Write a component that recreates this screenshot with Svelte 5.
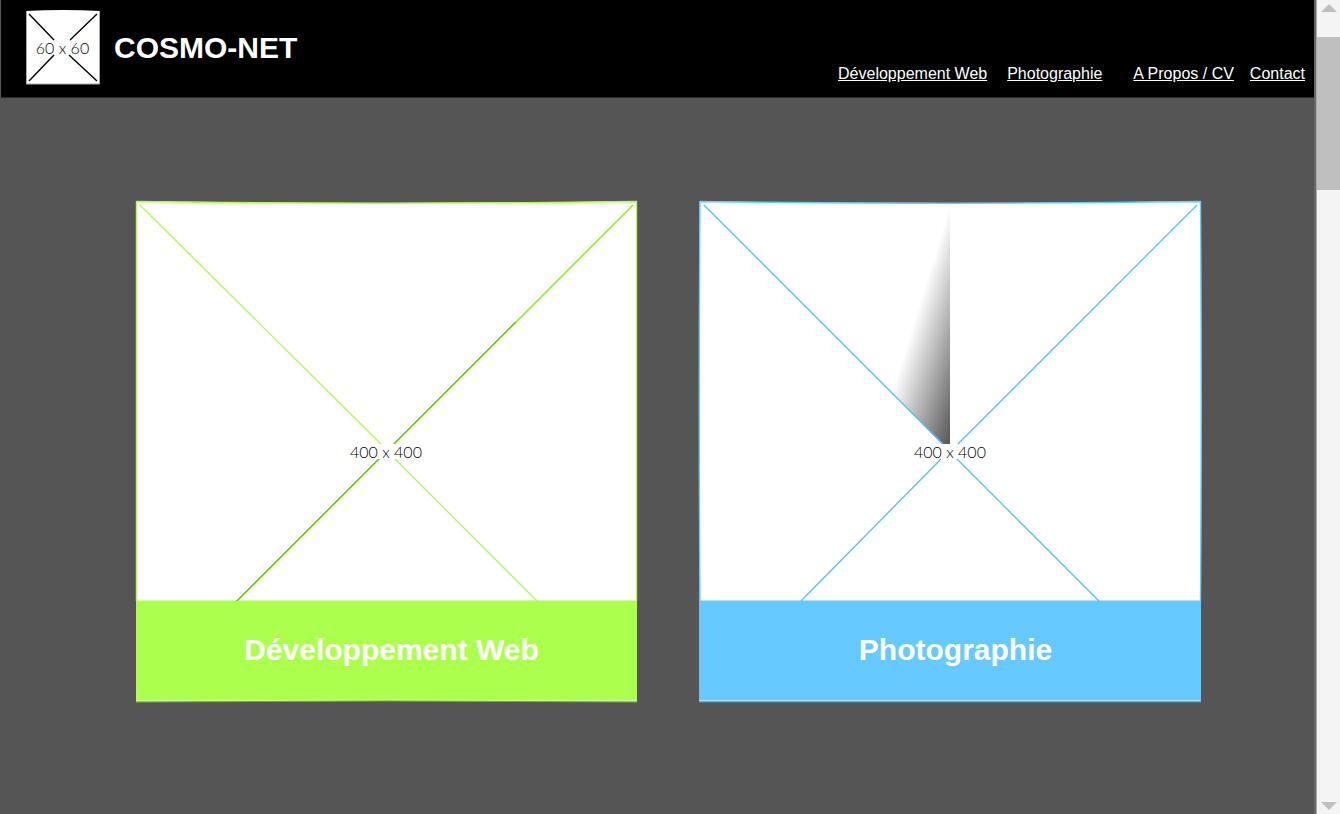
<script>
  const links = [
    { label: 'Développement Web', href: '#web', cls: 'web' },
    { label: 'Photographie', href: '#photo', cls: 'photo' },
    { label: 'A Propos / CV', href: '#cv', cls: 'cv' },
    { label: 'Contact', href: '#contact', cls: 'contact' }
  ];
</script>

<div class="window">
  <div class="page">
    <header>
      <a class="brand" href="#home">
        <svg class="logo" viewBox="0 0 74 76" aria-hidden="true">
          <path d="M0 2Q37 0 74 2V75H0Z" fill="#fff" />
          <path d="M0.5 75V2M73.5 2V75H0" fill="none" stroke="#aaa" stroke-width="1" />
          <path d="M3 5L28 31M71 5L44 31M28 46L3 72M43 46L71 72" fill="none" stroke="#000" stroke-width="1.4" />
          <text x="36.5" y="45" text-anchor="middle">60 x 60</text>
        </svg>
        <h1>COSMO-NET</h1>
      </a>
      <nav>
        {#each links as link}
          <a class={link.cls} href={link.href}>{link.label}</a>
        {/each}
      </nav>
    </header>

    <main>
      <a class="card green" href="#web">
        <svg viewBox="0 0 501 501" aria-hidden="true">
          <path d="M0 0Q250 4 501 0V501Q250 499 0 501Z" fill="#fff" />
          <path d="M0.5 0.5Q250 4 500.5 0.5V400M0.5 0.5V400" fill="none" stroke="#adff4d" stroke-width="1.4" />
          <path d="M0 399.5H501V501Q250 499 0 501Z" fill="#adff4d" />
          <path d="M1 499.5Q250 498.5 500 499.5" fill="none" stroke="#d0ff98" stroke-width="1" />
          <path d="M0 501Q250 499 501 501" fill="none" stroke="#78a845" stroke-width="1" />
          <path d="M4 4L245 243M259 258L401 400" stroke="#adff4d" stroke-width="1.3" />
          <path d="M497 4L258.5 243M243.5 258L101.5 400" stroke="#a4f842" stroke-width="1.6" />
          <path d="M380 120.5L257.5 243M242.5 258L100.5 400" stroke="#2c5410" stroke-width="0.8" />
          <path d="M497 4L380 120.5" stroke="#88d234" stroke-width="0.8" />
          <text x="250" y="257" text-anchor="middle">400 x 400</text>
        </svg>
        <h2>Développement Web</h2>
      </a>
      <a class="card blue" href="#photo">
        <svg viewBox="0 0 501 501" aria-hidden="true">
          <defs>
            <linearGradient id="shade" gradientUnits="userSpaceOnUse" x1="193" y1="191" x2="261" y2="212">
              <stop offset="0" stop-color="#fff" />
              <stop offset="1" stop-color="#555" />
            </linearGradient>
          </defs>
          <path d="M0.5 0Q250 4 502 0V501H0.5Z" fill="#fff" />
          <path d="M251 5V243H243L193 193Z" fill="url(#shade)" />
          <path d="M1 0.5Q250 4 501.5 0.5Q503 200 501.5 400M1 0.5Q-0.5 200 1 400" fill="none" stroke="#66c9ff" stroke-width="1.4" />
          <path d="M0.5 399.5H502V501H0.5Z" fill="#66c9ff" />
          <path d="M1 499.5H501" stroke="#b2e4ff" stroke-width="1" />
          <path d="M0.5 501H502" stroke="#519bc4" stroke-width="1" />
          <path d="M5 4L244 243M258 258L400 400M498 4L259 243M242 258L102 400" stroke="#58bdf3" stroke-width="1.3" />
          <text x="251" y="257" text-anchor="middle">400 x 400</text>
        </svg>
        <h2>Photographie</h2>
      </a>
    </main>
  </div>

  <div class="scroll" aria-hidden="true">
    <svg viewBox="0 0 16 8"><path d="M0 8L8 0L16 8Z" /></svg>
    <div class="track"><div class="thumb"></div></div>
    <svg viewBox="0 0 16 8"><path d="M0 0L8 8L16 0Z" /></svg>
  </div>
</div>

<style>
  :global(body) {
    margin: 0;
    background: #555;
    font-family: "Liberation Sans", Arial, sans-serif;
  }
  .window {
    display: flex;
    min-height: 100vh;
    background: #555;
  }
  .page {
    flex: 1;
    min-width: 0;
    padding-left: 1px;
    border-right: 2px solid #686868;
  }
  header {
    display: flex;
    justify-content: space-between;
    box-sizing: border-box;
    min-height: 98px;
    padding: 9px 9px 12px 25px;
    background: #000;
    border-bottom: 1px solid #292929;
  }
  a {
    color: #fff;
  }
  .brand {
    display: flex;
    align-items: center;
    gap: 14px;
    text-decoration: none;
  }
  .logo {
    display: block;
    width: 74px;
    height: 76px;
    overflow: visible;
  }
  h1,
  h2 {
    margin: 0;
    font-size: 30px;
    line-height: 36px;
    font-weight: 700;
  }
  h1 {
    padding-top: 2px;
  }
  text {
    font-family: Lato, sans-serif;
    font-size: 16px;
    font-weight: 300;
    fill: #000;
  }
  nav {
    display: flex;
    align-items: flex-end;
    font-size: 16px;
    line-height: 22px;
  }
  .photo {
    margin-left: 20px;
  }
  .cv {
    margin-left: 31px;
  }
  .contact {
    margin-left: 16px;
  }
  main {
    display: flex;
    justify-content: center;
    gap: 62px;
    padding: 103px 23px 103px 44px;
  }
  .card {
    display: grid;
    flex: 0 1 501px;
    min-width: 0;
    text-decoration: none;
    text-align: center;
  }
  .card svg {
    grid-area: 1 / 1;
    display: block;
    width: 100%;
    overflow: visible;
  }
  .card h2 {
    grid-area: 1 / 1;
    align-self: end;
    padding: 0 0 34px 10px;
  }
  .card.blue h2 {
    padding-left: 12px;
  }
  .scroll {
    display: flex;
    flex-direction: column;
    align-items: center;
    width: 24px;
    padding: 4px 0;
    box-sizing: border-box;
    background: #f4f4f4;
    border-left: 1px solid #aaa;
  }
  .scroll svg {
    width: 16px;
    height: 8px;
    fill: #bfbfbf;
  }
  .track {
    flex: 1;
    align-self: stretch;
    padding-top: 25px;
  }
  .thumb {
    height: 20%;
    background: #bfbfbf;
  }
</style>
